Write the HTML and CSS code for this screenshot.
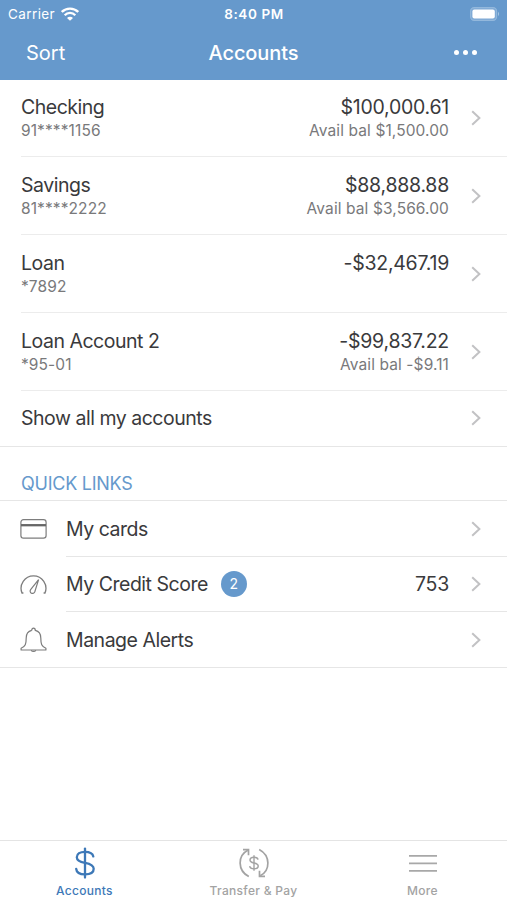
FILE: index.html
```html
<!DOCTYPE html>
<html lang="en">
<head>
  <meta charset="UTF-8">
  <meta name="viewport" content="width=device-width, initial-scale=1.0">
  <title>Accounts</title>
  <link rel="stylesheet" href="styles.css">
</head>
<body>
  <svg class="hidden">
    <symbol id="chevron" viewBox="0 0 10 16">
      <path d="M1.2 1.2 L8.4 8 L1.2 14.8" fill="none" stroke="#c2c2c4" stroke-width="2"/>
    </symbol>
  </svg>

  <header class="header">
    <div class="status-bar">
      <div class="carrier">
        <span>Carrier</span>
        <svg class="wifi" viewBox="0 0 18 14">
          <path d="M0.8 5 A11.6 11.6 0 0 1 17.2 5" fill="none" stroke="#fff" stroke-width="2.4"/>
          <path d="M3.7 8.2 A7.4 7.4 0 0 1 14.3 8.2" fill="none" stroke="#fff" stroke-width="2.3"/>
          <path d="M9 13.8 L6 10.9 A4.2 4.2 0 0 1 12 10.9 Z" fill="#fff"/>
        </svg>
      </div>
      <span class="time">8:40 PM</span>
      <svg class="battery" viewBox="0 0 30 14">
        <rect x="0.6" y="0.6" width="26" height="12.8" rx="3.6" fill="#7ea9d5" stroke="#93b8dc" stroke-width="1.1"/>
        <rect x="2.4" y="2.4" width="22.4" height="9.2" rx="2" fill="#fff"/>
        <path d="M28 4.8 Q30 7 28 9.2 Z" fill="#a9c6e3"/>
      </svg>
    </div>
    <nav class="nav-bar">
      <a class="sort">Sort</a>
      <h1>Accounts</h1>
      <div class="dots"><i></i><i></i><i></i></div>
    </nav>
  </header>

  <main>
    <section class="accounts">
      <div class="account first">
        <div class="names"><p class="name">Checking</p><p class="sub">91****1156</p></div>
        <div class="amounts"><p class="name">$100,000.61</p><p class="sub">Avail bal $1,500.00</p></div>
        <svg class="chevron"><use href="#chevron"/></svg>
      </div>
      <div class="account">
        <div class="names"><p class="name">Savings</p><p class="sub">81****2222</p></div>
        <div class="amounts"><p class="name">$88,888.88</p><p class="sub">Avail bal $3,566.00</p></div>
        <svg class="chevron"><use href="#chevron"/></svg>
      </div>
      <div class="account">
        <div class="names"><p class="name">Loan</p><p class="sub">*7892</p></div>
        <div class="amounts"><p class="name">-$32,467.19</p></div>
        <svg class="chevron"><use href="#chevron"/></svg>
      </div>
      <div class="account">
        <div class="names"><p class="name">Loan Account 2</p><p class="sub">*95-01</p></div>
        <div class="amounts"><p class="name">-$99,837.22</p><p class="sub">Avail bal -$9.11</p></div>
        <svg class="chevron"><use href="#chevron"/></svg>
      </div>
    </section>
    <div class="show-all">
      <p class="name">Show all my accounts</p>
      <svg class="chevron"><use href="#chevron"/></svg>
    </div>

    <h2>QUICK LINKS</h2>
    <section class="links">
      <div class="link">
        <svg class="icon" viewBox="0 0 28 28" fill="none" stroke="#7d7d7d" stroke-width="1.2">
          <rect x="0.9" y="4.6" width="25.2" height="18.6" rx="2.6"/>
          <path d="M1 10.2 H26" stroke="#666" stroke-width="2.3"/>
        </svg>
        <div class="link-body">
          <p class="name">My cards</p>
          <svg class="chevron"><use href="#chevron"/></svg>
        </div>
      </div>
      <div class="link short">
        <svg class="icon" viewBox="0 0 28 28" fill="none" stroke="#7d7d7d" stroke-width="1.3">
          <path d="M3.4 22 H2 A12.4 12.4 0 1 1 25 22 H23.6"/>
          <path d="M18.6 8.6 L10.6 18.6 A2.4 2.4 0 1 0 14.8 20.8 Z" stroke-width="1.2"/>
        </svg>
        <div class="link-body">
          <p class="name">My Credit Score</p>
          <span class="badge">2</span>
          <p class="name score">753</p>
          <svg class="chevron"><use href="#chevron"/></svg>
        </div>
      </div>
      <div class="link last">
        <svg class="icon" viewBox="0 0 28 28" fill="none" stroke="#7d7d7d" stroke-width="1.2" stroke-linejoin="round">
          <path d="M11.7 4.4 C11.7 1.4 15.3 1.4 15.3 4.4 C19 5.3 20.8 8.2 20.8 12 C20.8 18 21.6 20.3 25.9 22.2 V24 H1.1 V22.2 C5.4 20.3 6.2 18 6.2 12 C6.2 8.2 8 5.3 11.7 4.4"/>
          <path d="M11.2 24.2 A2.5 2 0 0 0 15.8 24.2"/>
        </svg>
        <div class="link-body">
          <p class="name">Manage Alerts</p>
          <svg class="chevron"><use href="#chevron"/></svg>
        </div>
      </div>
    </section>
  </main>

  <footer class="tab-bar">
    <div class="tab active">
      <svg viewBox="0 0 32 32" fill="none" stroke="#3d78b7" stroke-width="2.3" stroke-linecap="round">
        <path d="M16 1.6 V30.6"/>
        <path d="M24.3 9.4 C23.7 6.4 20.6 4.8 16 4.8 C11 4.8 7.8 7 7.8 10.3 C7.8 13.7 10.9 14.9 16 15.9 C21.3 16.9 24.7 18.4 24.7 21.8 C24.7 25.3 21.3 27.4 16 27.4 C10.8 27.4 7.5 25.3 7.2 21.9"/>
      </svg>
      <span>Accounts</span>
    </div>
    <div class="tab">
      <svg viewBox="0 0 32 32" fill="none" stroke="#a3a3a3" stroke-width="1.7">
        <path d="M10.8 29.6 C-0.6 23.5 -0.6 8.6 9.8 3.2"/>
        <path d="M5 2.7 H10.5 V8.2"/>
        <path d="M21.2 2.4 C32.6 8.5 32.6 23.4 22.2 28.8"/>
        <path d="M27 29.3 H21.5 V23.8"/>
        <path d="M16 8.3 V23.7" stroke-width="1.4"/>
        <path d="M20 12.7 C19.8 11 18.4 10.2 16 10.2 C13.6 10.2 12 11.2 12 13 C12 14.9 13.5 15.5 16 16 C18.6 16.5 20.2 17.2 20.2 19 C20.2 20.8 18.6 21.8 16 21.8 C13.4 21.8 12 20.9 11.7 19.1" stroke-width="1.5"/>
      </svg>
      <span>Transfer &amp; Pay</span>
    </div>
    <div class="tab">
      <svg viewBox="0 0 32 32" stroke="#a8a8a8" stroke-width="1.7">
        <path d="M2 8.8 H30 M2 16.3 H30 M2 23.8 H30"/>
      </svg>
      <span>More</span>
    </div>
  </footer>
</body>
</html>
```
FILE: styles.css
```css
* {
  margin: 0;
  padding: 0;
  box-sizing: border-box;
}

body {
  display: flex;
  flex-direction: column;
  height: 100vh;
  overflow: hidden;
  background: #fff;
  color: #3a3a3c;
  font-family: Inter, "Liberation Sans", sans-serif;
}

.hidden {
  display: none;
}

.header {
  height: 80px;
  background: #6699cc;
  color: #fff;
}

.status-bar {
  display: grid;
  grid-template-columns: 1fr auto 1fr;
  align-items: center;
  height: 27px;
  padding: 0 7px 0 8px;
  font-size: 13.5px;
}

.carrier {
  display: flex;
  align-items: center;
  gap: 6px;
  letter-spacing: 0.4px;
}

.wifi {
  width: 18px;
  height: 14px;
}

.time {
  font-weight: 600;
  letter-spacing: 0.6px;
}

.battery {
  width: 30px;
  height: 14px;
  justify-self: end;
}

.nav-bar {
  display: grid;
  grid-template-columns: 1fr auto 1fr;
  align-items: center;
  height: 51px;
  padding: 0 26px;
  font-size: 20px;
}

.nav-bar h1 {
  font-size: 20px;
  font-weight: 500;
  letter-spacing: -0.1px;
}

.dots {
  display: flex;
  justify-self: end;
  gap: 4px;
  margin-right: 4px;
}

.dots i {
  width: 5px;
  height: 5px;
  border-radius: 50%;
  background: #fff;
}

.name {
  font-size: 19.5px;
  letter-spacing: -0.48px;
  line-height: 24px;
  white-space: nowrap;
}

.amounts .name,
.score {
  letter-spacing: -0.25px;
}

.sub {
  font-size: 15.5px;
  letter-spacing: 0.1px;
  line-height: 24px;
  color: #79797b;
}

.account {
  display: flex;
  height: 78px;
  margin-left: 21px;
  padding: 16px 26px 0 0;
  border-bottom: 1px solid #ececec;
}

.account.first {
  height: 77px;
  padding-top: 15px;
}

.names {
  flex: 1;
}

.amounts {
  text-align: right;
}

.chevron {
  flex: none;
  width: 10px;
  height: 16px;
  margin-left: 22px;
}

.account .chevron {
  margin-top: 14.5px;
}

.show-all {
  display: flex;
  align-items: center;
  justify-content: space-between;
  height: 56px;
  padding: 0 26px 1px 21px;
  border-bottom: 1px solid #e6e6e6;
}

h2 {
  height: 54px;
  padding: 25px 0 0 21px;
  border-bottom: 1px solid #e6e6e6;
  color: #6699cc;
  font-size: 18px;
  font-weight: 400;
  letter-spacing: -0.25px;
  line-height: 24px;
}

.link {
  display: flex;
  align-items: center;
  height: 56px;
  padding-left: 20px;
}

.link.short {
  height: 55px;
}

.link.last {
  border-bottom: 1px solid #e6e6e6;
}

.icon {
  width: 28px;
  height: 28px;
  margin-right: 18px;
}

.link-body {
  display: flex;
  flex: 1;
  align-items: center;
  height: 100%;
  padding-right: 26px;
  border-bottom: 1px solid #e6e6e6;
}

.link.last .link-body {
  border-bottom: none;
}

.link-body .chevron {
  margin-left: auto;
}

.badge {
  width: 26px;
  height: 26px;
  margin-left: 13px;
  border-radius: 50%;
  background: #6699cc;
  color: #fff;
  font-size: 14px;
  line-height: 26px;
  text-align: center;
}

.score {
  margin-left: auto;
}

.score + .chevron {
  margin-left: 22px;
}

.tab-bar {
  display: grid;
  grid-template-columns: repeat(3, 1fr);
  height: 60px;
  margin-top: auto;
  border-top: 1px solid #e4e4e4;
}

.tab {
  display: flex;
  flex-direction: column;
  align-items: center;
  padding-top: 6px;
  color: #a3a3a3;
  font-size: 12px;
  font-weight: 500;
  letter-spacing: 0.3px;
}

.tab svg {
  width: 32px;
  height: 32px;
}

.tab span {
  margin-top: 4px;
  line-height: 16px;
}

.tab.active {
  color: #3d78b7;
}
```
